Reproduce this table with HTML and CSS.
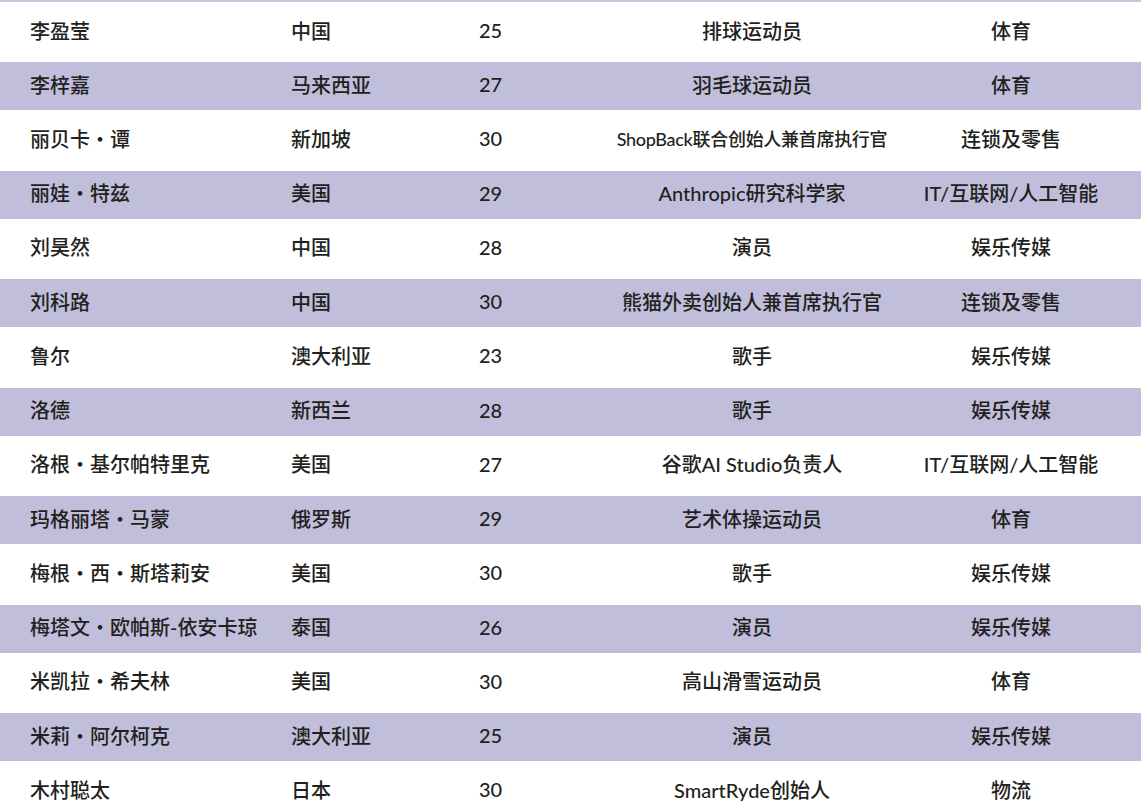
FILE: index.html
```html
<!DOCTYPE html>
<html lang="zh-CN">
<head>
<meta charset="utf-8">
<link rel="stylesheet" href="styles.css">
</head>
<body>
<div class="table">
  <div class="topline"></div>
  <div class="row"><span class="c1">李盈莹</span><span class="c2">中国</span><span class="c3">25</span><span class="c4">排球运动员</span><span class="c5">体育</span></div>
  <div class="row alt"><span class="c1">李梓嘉</span><span class="c2">马来西亚</span><span class="c3">27</span><span class="c4">羽毛球运动员</span><span class="c5">体育</span></div>
  <div class="row"><span class="c1">丽贝卡・谭</span><span class="c2">新加坡</span><span class="c3">30</span><span class="c4 small">ShopBack联合创始人兼首席执行官</span><span class="c5">连锁及零售</span></div>
  <div class="row alt"><span class="c1">丽娃・特兹</span><span class="c2">美国</span><span class="c3">29</span><span class="c4">Anthropic研究科学家</span><span class="c5">IT/互联网/人工智能</span></div>
  <div class="row"><span class="c1">刘昊然</span><span class="c2">中国</span><span class="c3">28</span><span class="c4">演员</span><span class="c5">娱乐传媒</span></div>
  <div class="row alt"><span class="c1">刘科路</span><span class="c2">中国</span><span class="c3">30</span><span class="c4">熊猫外卖创始人兼首席执行官</span><span class="c5">连锁及零售</span></div>
  <div class="row"><span class="c1">鲁尔</span><span class="c2">澳大利亚</span><span class="c3">23</span><span class="c4">歌手</span><span class="c5">娱乐传媒</span></div>
  <div class="row alt"><span class="c1">洛德</span><span class="c2">新西兰</span><span class="c3">28</span><span class="c4">歌手</span><span class="c5">娱乐传媒</span></div>
  <div class="row"><span class="c1">洛根・基尔帕特里克</span><span class="c2">美国</span><span class="c3">27</span><span class="c4">谷歌AI Studio负责人</span><span class="c5">IT/互联网/人工智能</span></div>
  <div class="row alt"><span class="c1">玛格丽塔・马蒙</span><span class="c2">俄罗斯</span><span class="c3">29</span><span class="c4">艺术体操运动员</span><span class="c5">体育</span></div>
  <div class="row"><span class="c1">梅根・西・斯塔莉安</span><span class="c2">美国</span><span class="c3">30</span><span class="c4">歌手</span><span class="c5">娱乐传媒</span></div>
  <div class="row alt"><span class="c1">梅塔文・欧帕斯-依安卡琼</span><span class="c2">泰国</span><span class="c3">26</span><span class="c4">演员</span><span class="c5">娱乐传媒</span></div>
  <div class="row"><span class="c1">米凯拉・希夫林</span><span class="c2">美国</span><span class="c3">30</span><span class="c4">高山滑雪运动员</span><span class="c5">体育</span></div>
  <div class="row alt"><span class="c1">米莉・阿尔柯克</span><span class="c2">澳大利亚</span><span class="c3">25</span><span class="c4">演员</span><span class="c5">娱乐传媒</span></div>
  <div class="row"><span class="c1">木村聪太</span><span class="c2">日本</span><span class="c3">30</span><span class="c4">SmartRyde创始人</span><span class="c5">物流</span></div>
</div>
</body>
</html>
```
FILE: styles.css
```css
html, body {
  margin: 0;
  padding: 0;
  background: #ffffff;
}
body {
  font-family: Lato, "Noto Sans CJK SC", sans-serif;
  font-size: 20px;
  font-weight: 500;
  color: #231f20;
  overflow: hidden;
}
.table {
  display: flex;
  flex-direction: column;
}
.topline {
  height: 2px;
  background: #c9c7dd;
}
.row {
  display: grid;
  grid-template-columns: 261px 188px 123px 300px 218px;
  padding-left: 30px;
  padding-bottom: 4px;
  box-sizing: border-box;
  height: 60.5px;
  align-items: center;
  background: #ffffff;
  white-space: nowrap;
}
.row:nth-child(2) {
  height: 60px;
}
.row.alt {
  height: 48px;
  background: #c0bedb;
}
.c1, .c2, .c3 {
  text-align: left;
}
.c4, .c5 {
  text-align: center;
}
.c4.small {
  font-size: 18px;
  letter-spacing: -0.3px;
}
```
